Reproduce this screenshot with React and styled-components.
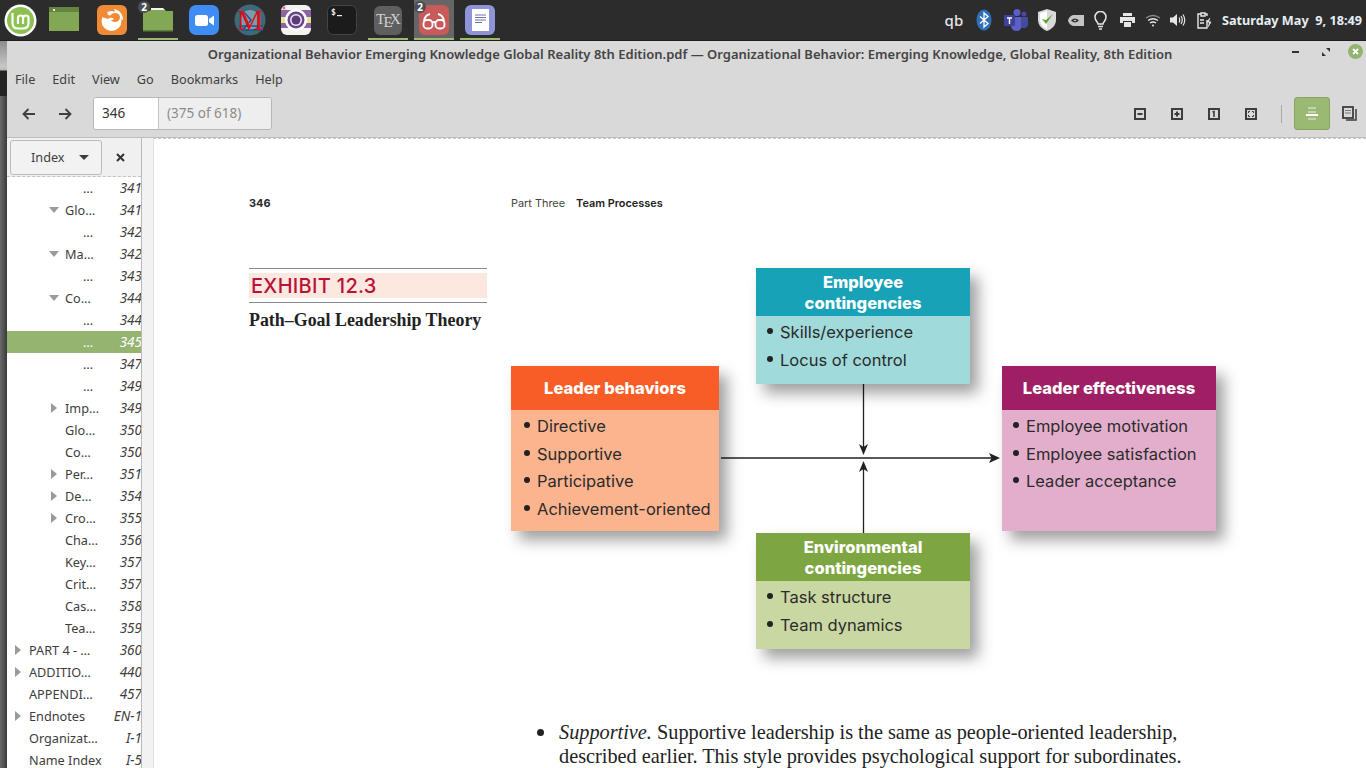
import React from "react";
import styled, { createGlobalStyle } from "styled-components";

const Global = createGlobalStyle`
  html, body { margin: 0; padding: 0; height: 100%; overflow: hidden; background: #2b2b2b; }
  * { box-sizing: border-box; }
`;

const UI = `"Noto Sans", "Open Sans", sans-serif`;
const BOOK = `Inter, "Open Sans", sans-serif`;
const SERIF = `"Liberation Serif", serif`;

const Screen = styled.div`
  width: 1366px; height: 768px; display: flex; flex-direction: column; overflow: hidden; font-family: ${UI};
`;
const Panel = styled.header`
  height: 41px; flex: none; display: flex; align-items: stretch; background: #2c2c2c; border-bottom: 1px solid #1d1d1d;
`;
const Launcher = styled.div`
  position: relative; width: ${p => p.$w || 46}px; margin-left: ${p => p.$ml || 0}px; height: 40px; flex: none;
  display: flex; align-items: center; justify-content: center;
  &::before {
    content: ""; position: absolute; top: 0; bottom: 0; left: 3px; right: 3px;
    background: ${p => p.$hot ? "#666666" : "transparent"};
  }
  &::after {
    content: ""; position: absolute; bottom: 0; left: 3px; right: 3px; height: 2px;
    background: ${p => p.$on ? "#9ab973" : "transparent"};
  }
  & > svg { position: relative; z-index: 1; }
`;
const Badge = styled.span`
  position: absolute; z-index: 2; left: 3px; top: 1px; width: 12px; height: 12px; border-radius: 50%;
  background: #4a4f55; color: #fff; font-size: 10px; font-weight: 700; line-height: 12px; text-align: center;
`;
const Tray = styled.div`
  margin-left: auto; display: flex; align-items: center; height: 40px; padding-right: 4px;
`;
const TraySlot = styled.div`
  width: ${p => p.$w}px; height: 40px; flex: none; display: flex; align-items: center; justify-content: center;
  color: #e6e6e6; font-size: 15px; font-weight: 500;
`;
const Clock = styled.time`
  margin-left: 4px; color: #e5edf5; font-size: 12.7px; font-weight: 700; white-space: pre;
`;

const Desk = styled.div`flex: 1; min-height: 0; display: flex;`;
const Strip = styled.div`
  width: 7px; flex: none;
  background:
    linear-gradient(to bottom, #8c8c8c 0, #c8c8c8 26px, #bdb8ae 29px, #232323 30px, #232323 55px, transparent 55px),
    linear-gradient(to right, #6a6a6a, #3a3a3a);
`;
const Win = styled.div`flex: 1; min-width: 0; display: flex; flex-direction: column; background: #d9d9d9;`;

const TitleBar = styled.div`
  height: 26px; flex: none; position: relative; display: flex; align-items: center; justify-content: center;
  padding: 0 0 1px 7px;
`;
const Title = styled.div`font-size: 13px; font-weight: 600; color: #444; white-space: nowrap;`;
const WinButtons = styled.div`
  position: absolute; right: 3px; top: 3px; display: flex; align-items: center; gap: 15px;
`;
const WinBtn = styled.div`
  width: 15px; height: 15px; display: flex; align-items: center; justify-content: center;
  border-radius: 50%; background: ${p => p.$close ? "#93b46e" : "transparent"};
`;
const MenuBar = styled.nav`
  height: 24px; flex: none; display: flex; align-items: center; gap: 17px; padding-left: 8px;
  font-size: 12.7px; color: #3f3f3f;
`;
const ToolBar = styled.div`
  height: 47px; flex: none; display: flex; align-items: center; padding: 0 0 1px 4px;
  border-bottom: 1px solid #bdbdbd;
`;
const NavBtn = styled.div`
  width: 36px; height: 33px; display: flex; align-items: center; justify-content: center; flex: none;
`;
const PageEntry = styled.div`
  margin-left: 10px; width: 179px; height: 33px; display: flex; border: 1px solid #b8b8b8; border-radius: 3px; overflow: hidden;
  font-size: 13.5px;
`;
const PageInput = styled.div`
  width: 65px; background: #fff; border-right: 1px solid #c4c4c4; color: #333; padding-left: 8px; line-height: 31px;
`;
const PageInfo = styled.div`
  flex: 1; background: #eeeeee; color: #8c8c8c; padding-left: 8px; line-height: 31px;
`;
const ToolRight = styled.div`margin-left: auto; display: flex; align-items: center;`;
const ZoomBtn = styled.div`
  width: 37px; height: 33px; display: flex; align-items: center; justify-content: center; flex: none;
`;
const Sep = styled.div`width: 1px; height: 18px; background: #a9a9a9; margin: 0 12px 0 12px;`;
const Toggle = styled.div`
  width: 36px; height: 33px; flex: none; border-radius: 3px; background: #9ab973; border: 1px solid #86a561;
  display: flex; align-items: center; justify-content: center;
`;
const PlainBtn = styled.div`
  width: 36px; height: 33px; flex: none; display: flex; align-items: center; justify-content: center; padding-left: 2px;
`;

const Main = styled.div`flex: 1; min-height: 0; display: flex; background: #fff;`;
const Sidebar = styled.aside`
  width: 134px; flex: none; display: flex; flex-direction: column; overflow: hidden; background: #fff;
`;
const SideHead = styled.div`
  height: 39px; flex: none; display: flex; align-items: center; padding-left: 3px; background: #f0f0f0;
  border-bottom: 1px dashed #c4c4c4;
`;
const Combo = styled.div`
  width: 92px; height: 35px; flex: none; display: flex; align-items: center; justify-content: space-between;
  padding: 0 12px 0 20px; background: #f2f2f2; border: 1px solid #bbbbbb; border-radius: 3px; font-size: 12.7px; color: #3f3f3f;
`;
const Caret = styled.span`
  width: 0; height: 0; border-left: 5px solid transparent; border-right: 5px solid transparent; border-top: 5px solid #3c3c3c;
`;
const CloseTab = styled.div`
  width: 36px; display: flex; justify-content: center; align-items: center;
`;
const Tree = styled.div`width: 135px;`;
const Row = styled.div`
  height: 22px; display: flex; align-items: center; padding-left: ${p => 8 + p.$d * 18}px;
  background: ${p => p.$sel ? "#95b470" : "transparent"};
  color: ${p => p.$sel ? "#fff" : "#3d3d3d"}; font-size: 12.7px; white-space: nowrap;
`;
const Expander = styled.span`
  width: ${p => p.$down ? 16 : 14}px; flex: none; display: flex; align-items: center;
  margin-left: ${p => p.$down ? "-2px" : "0"};
`;
const RowTitle = styled.span`flex: 1; min-width: 0; overflow: hidden;`;
const RowPage = styled.span`flex: none; font-style: italic; margin-left: 4px; font-size: 13.5px;`;
const Split = styled.div`
  width: 12px; flex: none; background: #f2f2f2; border-left: 1px solid #b9b9b9;
`;
const Doc = styled.main`
  flex: 1; min-width: 0; overflow: hidden; background: #fff; border-top: 1px dashed #c9c9c9; border-left: 1px solid #e2e2e2;
  padding: 56px 0 0 95px; color: #2a2a2a;
`;
const Running = styled.div`
  display: grid; grid-template-columns: 262px 1fr; font-family: ${BOOK}; font-size: 10.9px; line-height: 16px;
`;
const Folio = styled.span`font-weight: 700;`;
const RunHead = styled.span`
  display: flex; gap: 11px; color: #444;
  & b { color: #222; font-weight: 600; }
`;
const Spread = styled.div`
  margin-top: 57px; display: grid; grid-template-columns: 262px 705px; height: 452px;
`;
const Exhibit = styled.div`width: 238px;`;
const ExLabel = styled.div`
  border-top: 1px solid #8a8a8a; border-bottom: 1px solid #8a8a8a; padding: 4px 0;
`;
const ExTint = styled.div`
  height: 25px; background: #fde8df; color: #b9123a; font-family: ${BOOK}; font-size: 20px; letter-spacing: 0.3px; font-weight: 500; line-height: 26px; padding-left: 2px; white-space: nowrap;
`;
const ExTitle = styled.div`
  margin-top: 7px; font-family: ${SERIF}; font-weight: 700; font-size: 17.9px; line-height: 20px; color: #222; white-space: nowrap;
`;
const Diagram = styled.div`position: relative; width: 705px; height: 400px;`;
const Node = styled.section`
  position: absolute; left: ${p => p.$x}px; top: ${p => p.$y}px; width: ${p => p.$w}px; height: ${p => p.$h}px;
  display: flex; flex-direction: column; background: ${p => p.$body};
  box-shadow: 8px 9px 14px rgba(0,0,0,0.38);
  font-family: ${BOOK};
`;
const NodeHead = styled.h3`
  margin: 0; height: ${p => p.$h}px; flex: none; display: flex; align-items: center; justify-content: center; text-align: center;
  background: ${p => p.$bg}; color: #fff; font-size: 16.5px; font-weight: 800; line-height: 21px; padding-top: 1px;
`;
const NodeList = styled.ul`
  list-style: none; margin: 0; padding: ${p => p.$top}px 0 0 ${p => p.$left}px; font-size: 16.5px; color: #2b2b2b;
`;
const NodeItem = styled.li`
  height: ${p => p.$h}px; line-height: ${p => p.$h}px; display: flex; align-items: center; gap: 7px; white-space: nowrap;
  &::before { content: ""; width: 6px; height: 6px; border-radius: 50%; background: #222; margin-bottom: 3px; flex: none; }
`;
const Wires = styled.svg`position: absolute; left: 0; top: 0; overflow: visible; pointer-events: none;`;
const Para = styled.div`
  margin-left: 288px; width: 660px; display: flex; gap: 15px; font-family: ${SERIF}; font-size: 20.3px; line-height: 24px; color: #222;
`;
const ParaDot = styled.span`
  width: 7px; height: 7px; border-radius: 50%; background: #222; flex: none; margin-top: 9px;
`;

const Mint = () => (
  <svg width="33" height="33" viewBox="0 0 33 33">
    <circle cx="16.5" cy="16.5" r="16" fill="#fff" />
    <circle cx="16.5" cy="16.5" r="13.5" fill="#8cc152" />
    <path d="M8.500 9v10q0 5.500 5.500 5.500h5q5.500 0 5.500-5.500v-5q0-2.500-2.500-2.500t-3 2.500v6M14 20v-6q0-2.500 2.500-2.500T19.500 14" fill="none" stroke="#fff" strokeWidth="2.200" />
  </svg>
);
const FolderFlat = () => (
  <svg width="30" height="26" viewBox="0 0 30 26">
    <rect x="0" y="0" width="30" height="24" fill="#82a755" />
    <rect x="0" y="0" width="30" height="5" fill="#64843f" />
    <rect x="4" y="2" width="2" height="2" fill="#e8e8e8" />
  </svg>
);
const FolderTab = () => (
  <svg width="30" height="26" viewBox="0 0 30 26">
    <path d="M8 1h12l2 2H8z" fill="#f3f3f3" />
    <path d="M0 4h6l2-1h14l1 1 h7v20H0z" fill="#82a755" />
    <rect x="0" y="23" width="30" height="1.500" fill="#5f7f3a" />
  </svg>
);
const Firefox = () => (
  <svg width="30" height="30" viewBox="0 0 30 30">
    <rect width="30" height="30" rx="6" fill="#f08a35" />
    <circle cx="14.500" cy="16" r="10" fill="#fff" />
    <path d="M17 4c6 1 9 6 9 11l-4-1-3-5z" fill="#fff" />
    <ellipse cx="18" cy="12.500" rx="5" ry="4.500" fill="#f08a35" />
    <path d="M5 12c1-3 3-5 5-6l1 4 4 1c-1 2-3 2-4 3z" fill="#f08a35" />
    <path d="M12 13q3-1 5 1-2 2-5 1z" fill="#fff" />
  </svg>
);
const Zoom = () => (
  <svg width="30" height="30" viewBox="0 0 30 30">
    <rect width="30" height="30" rx="7" fill="#3f8cf5" />
    <rect x="6" y="10" width="13" height="11" rx="2.500" fill="#fff" />
    <path d="M20 14l5-3.500v10L20 17z" fill="#fff" />
  </svg>
);
const Maple = () => (
  <svg width="32" height="32" viewBox="0 0 32 32">
    <circle cx="16" cy="16" r="15.500" fill="#3f6878" />
    <circle cx="16" cy="16" r="10" fill="#7d9cab" />
    <path d="M5 22h24M9 7l8 9-8 10h20" fill="none" stroke="#274f87" strokeWidth="1.500" />
    <text x="16" y="26" textAnchor="middle" fontFamily="Liberation Serif, serif" fontSize="30" fill="#d8101c">M</text>
  </svg>
);
const Camera = () => (
  <svg width="30" height="30" viewBox="0 0 30 30">
    <rect width="30" height="30" rx="6" fill="#f2f2ee" />
    <rect y="5" width="30" height="7" fill="#8c64a6" />
    <rect y="12" width="30" height="6" fill="#e7e29b" />
    <rect y="18" width="30" height="5" fill="#8c64a6" />
    <circle cx="15" cy="15" r="11" fill="#fff" />
    <circle cx="15" cy="15" r="8.500" fill="#6a4587" />
    <circle cx="15" cy="15" r="6" fill="#f0e9f5" />
    <circle cx="15" cy="15" r="4.500" fill="#5b3b78" />
    <circle cx="3" cy="3" r="1.500" fill="#ee6a6a" />
  </svg>
);
const Term = () => (
  <svg width="30" height="30" viewBox="0 0 30 30">
    <rect x="0.500" y="0.500" width="29" height="29" rx="6" fill="#1b1b1b" stroke="#444" />
    <text x="4" y="10" fontFamily="DejaVu Sans Mono, monospace" fontSize="8" fontWeight="700" fill="#eee">$</text>
    <rect x="10" y="10" width="5" height="1.200" fill="#eee" />
  </svg>
);
const Tex = () => (
  <svg width="28" height="29" viewBox="0 0 28 29">
    <rect width="28" height="29" rx="6" fill="#5f5f5f" />
    <text x="2" y="18" fontFamily="Liberation Serif, serif" fontSize="15" fill="#d2d2d2">T</text>
    <text x="9.500" y="21" fontFamily="Liberation Serif, serif" fontSize="15" fill="#d2d2d2">E</text>
    <text x="16" y="18" fontFamily="Liberation Serif, serif" fontSize="15" fill="#d2d2d2">X</text>
  </svg>
);
const Reader = () => (
  <svg width="30" height="30" viewBox="0 0 30 30">
    <rect width="30" height="30" rx="6" fill="#c95a5a" />
    <rect x="4.500" y="15" width="9" height="8.500" rx="3.500" fill="none" stroke="#fff" strokeWidth="1.800" />
    <rect x="16.500" y="15" width="9" height="8.500" rx="3.500" fill="none" stroke="#fff" strokeWidth="1.800" />
    <path d="M13.500 17.500q1.500-1 3 0M5 16q1-6 6-7M25 16q-1-6-6-7" fill="none" stroke="#fff" strokeWidth="1.800" />
  </svg>
);
const Notes = () => (
  <svg width="30" height="30" viewBox="0 0 30 30">
    <rect width="30" height="30" rx="6" fill="#8f93d8" />
    <rect x="7" y="4" width="17" height="22" fill="#fff" />
    <path d="M10 10h11M10 12.500h11M10 15h11M10 17.500h7" stroke="#6f73a8" strokeWidth="1" />
  </svg>
);

const S = "#e6e6e6";
const Bluetooth = () => (
  <svg width="16" height="22" viewBox="0 0 16 22">
    <ellipse cx="8" cy="11" rx="7.500" ry="10.500" fill="#2f6fb5" />
    <path d="M4 7.500l8 7-4 3.500V4l4 3.500-8 7" fill="none" stroke="#fff" strokeWidth="1.300" />
  </svg>
);
const Teams = () => (
  <svg width="24" height="22" viewBox="0 0 24 22">
    <circle cx="13" cy="3.500" r="3.500" fill="#5b5fc7" />
    <circle cx="20" cy="5" r="2.500" fill="#454a9e" />
    <path d="M15 8h9v7a4 4 0 01-5 4h-4z" fill="#454a9e" />
    <path d="M6 8h11v10a4 4 0 01-4 4 6 6 0 01-6-5z" fill="#5b5fc7" />
    <rect y="6" width="11" height="11" rx="1" fill="#3e4298" />
    <path d="M3 9h5M5.500 9v6" stroke="#fff" strokeWidth="1.400" />
  </svg>
);
const Shield = () => (
  <svg width="20" height="22" viewBox="0 0 20 22">
    <path d="M10 0l9 3v8c0 5-4 9-9 11-5-2-9-6-9-11V3z" fill="#d9d9d9" />
    <path d="M10 2v18c-4-2-7-5-7-9V4z" fill="#fff" />
    <path d="M5 10l4 5 7-10-7 6z" fill="#5ca532" />
  </svg>
);
const Nvidia = () => (
  <svg width="16" height="11" viewBox="0 0 16 11">
    <path d="M5 0h11v11H5C2 10 0 7 0 5.500 0 4 2 1 5 0z" fill="#c4c4c4" />
    <path d="M3 5.500q4-4 8 0-4 4-8 0zM5.500 5.500q1.500-1.500 3 0-1.500 1.500-3 0z" fill="#333" fillRule="evenodd" />
  </svg>
);
const Bulb = () => (
  <svg width="13" height="19" viewBox="0 0 13 19" fill="none" stroke={S} strokeWidth="1.500">
    <path d="M4 13c0-2-3-3-3-7a5.500 5.500 0 0111 0c0 4-3 5-3 7z" />
    <path d="M4 15.500h5M5 18h3" />
  </svg>
);
const Printer = () => (
  <svg width="15" height="14" viewBox="0 0 15 14">
    <path d="M3 0h9v3H3zM0 4h15v6h-3V8H3v2H0zM4 9h7v5H4z" fill={S} />
  </svg>
);
const Wifi = () => (
  <svg width="16" height="13" viewBox="0 0 16 13" fill="none" stroke={S} strokeWidth="1.300">
    <path d="M1 4q7-5 14 0" opacity=".5" />
    <path d="M3 6.500q5-3.500 10 0M5 9q3-2 6 0" />
    <circle cx="8" cy="11.500" r="1" fill={S} stroke="none" />
  </svg>
);
const Volume = () => (
  <svg width="16" height="14" viewBox="0 0 16 14">
    <path d="M0 4.500h3L7 1v12L3 9.500H0z" fill={S} />
    <path d="M9 4.500q1.500 2.500 0 5M11 3q2.500 4 0 8M13 1.500q3.500 5.500 0 11" fill="none" stroke={S} strokeWidth="1.200" />
  </svg>
);
const Clip = () => (
  <svg width="15" height="17" viewBox="0 0 15 17" fill="none" stroke={S} strokeWidth="1.400">
    <path d="M4 2H1v14h9V8M8 2h2v2" />
    <path d="M4 1h4v3H4zM3 8h4M3 11h4" />
    <path d="M13 6l-3 4h4l-3 5" fill={S} strokeWidth=".8" />
  </svg>
);

const ArrowL = ({ flip }) => (
  <svg width="14" height="12" viewBox="0 0 14 12" fill="none" stroke="#3f3f3f" strokeWidth="1.800" style={flip ? { transform: "scaleX(-1)" } : undefined}>
    <path d="M13 6H2M6.500 1L1.500 6l5 5" />
  </svg>
);
const Mark = ({ d, w = 2 }) => (
  <svg width="12" height="12" viewBox="0 0 12 12">
    <rect x="1" y="1" width="10" height="10" fill="none" stroke="#3d3d3d" strokeWidth="2" />
    <path d={d} fill="none" stroke="#3d3d3d" strokeWidth={w} />
  </svg>
);
const Continuous = () => (
  <svg width="14" height="16" viewBox="0 0 14 16">
    <path d="M3 1h8v2H3zM3 5h8v2H3zM3 12h8v2H3z" fill="#c3d4ad" />
    <rect x="1" y="8" width="12" height="2" fill="#fff" />
  </svg>
);
const Dual = () => (
  <svg width="15" height="15" viewBox="0 0 15 15" fill="none" stroke="#3d3d3d">
    <rect x="1" y="1" width="10" height="11" strokeWidth="1.800" />
    <path d="M14 3v11H4" strokeWidth="1.500" />
    <path d="M3 4.500h6M3 7h6" strokeWidth="1.200" stroke="#777" />
  </svg>
);
const Down = () => <svg width="10" height="6" viewBox="0 0 10 6"><path d="M0 0h10L5 6z" fill="#9a9a9a" /></svg>;
const Right = () => <svg width="6" height="10" viewBox="0 0 6 10"><path d="M0 0v10l6-5z" fill="#9a9a9a" /></svg>;

const rows = [
  [3, 0, "…", "341"], [2, "d", "Glo…", "341"], [3, 0, "…", "342"], [2, "d", "Ma…", "342"], [3, 0, "…", "343"],
  [2, "d", "Co…", "344"], [3, 0, "…", "344"], [3, 0, "…", "345", true], [3, 0, "…", "347"], [3, 0, "…", "349"],
  [2, "r", "Imp…", "349"], [2, 0, "Glo…", "350"], [2, 0, "Co…", "350"], [2, "r", "Per…", "351"], [2, "r", "De…", "354"],
  [2, "r", "Cro…", "355"], [2, 0, "Cha…", "356"], [2, 0, "Key…", "357"], [2, 0, "Crit…", "357"], [2, 0, "Cas…", "358"],
  [2, 0, "Tea…", "359"], [0, "r", "PART 4 - …", "360"], [0, "r", "ADDITIO…", "440"], [0, 0, "APPENDI…", "457"],
  [0, "r", "Endnotes", "EN-1"], [0, 0, "Organizat…", "I-1"], [0, 0, "Name Index", "I-5"],
];

const BoxNode = ({ x, y, h, w, head, headH, headBg, body, items, top, left, step }) => (
  <Node $x={x} $y={y} $w={w} $h={h} $body={body}>
    <NodeHead $h={headH} $bg={headBg}>{head}</NodeHead>
    <NodeList $top={top} $left={left}>
      {items.map(i => <NodeItem key={i} $h={step}>{i}</NodeItem>)}
    </NodeList>
  </Node>
);

export default function App() {
  return (
    <Screen>
      <Global />
      <Panel>
        <Launcher $w={41}><Mint /></Launcher>
        <Launcher><FolderFlat /></Launcher>
        <Launcher $ml={2}><Firefox /></Launcher>
        <Launcher $on><Badge>2</Badge><FolderTab /></Launcher>
        <Launcher><Zoom /></Launcher>
        <Launcher><Maple /></Launcher>
        <Launcher><Camera /></Launcher>
        <Launcher><Term /></Launcher>
        <Launcher $on><Tex /></Launcher>
        <Launcher $on $hot><Badge>2</Badge><Reader /></Launcher>
        <Launcher $on><Notes /></Launcher>
        <Tray>
          <TraySlot $w={24}>qb</TraySlot>
          <TraySlot $w={36}><Bluetooth /></TraySlot>
          <TraySlot $w={28}><Teams /></TraySlot>
          <TraySlot $w={34}><Shield /></TraySlot>
          <TraySlot $w={24}><Nvidia /></TraySlot>
          <TraySlot $w={26}><Bulb /></TraySlot>
          <TraySlot $w={28}><Printer /></TraySlot>
          <TraySlot $w={22}><Wifi /></TraySlot>
          <TraySlot $w={28}><Volume /></TraySlot>
          <TraySlot $w={26}><Clip /></TraySlot>
          <Clock>Saturday May  9, 18:49</Clock>
        </Tray>
      </Panel>
      <Desk>
        <Strip />
        <Win>
          <TitleBar>
            <Title>Organizational Behavior Emerging Knowledge Global Reality 8th Edition.pdf — Organizational Behavior: Emerging Knowledge, Global Reality, 8th Edition</Title>
            <WinButtons>
              <WinBtn><svg width="8" height="2"><rect width="7" height="2" fill="#333" /></svg></WinBtn>
              <WinBtn><svg width="8" height="8" viewBox="0 0 8 8"><path d="M4 0h4v4zM0 4l4 4H0z" fill="#333" /></svg></WinBtn>
              <WinBtn $close><svg width="7" height="7" viewBox="0 0 7 7"><path d="M1 1l5 5M6 1L1 6" stroke="#fff" strokeWidth="1.800" /></svg></WinBtn>
            </WinButtons>
          </TitleBar>
          <MenuBar>
            <span>File</span><span>Edit</span><span>View</span><span>Go</span><span>Bookmarks</span><span>Help</span>
          </MenuBar>
          <ToolBar>
            <NavBtn><ArrowL /></NavBtn>
            <NavBtn><ArrowL flip /></NavBtn>
            <PageEntry>
              <PageInput>346</PageInput>
              <PageInfo>(375 of 618)</PageInfo>
            </PageEntry>
            <ToolRight>
              <ZoomBtn><Mark d="M3.500 6h5" /></ZoomBtn>
              <ZoomBtn><Mark d="M3.500 6h5M6 3.500v5" /></ZoomBtn>
              <ZoomBtn><Mark d="M4.500 4L6 3.500V9" w={1.600} /></ZoomBtn>
              <ZoomBtn><Mark d="M3.500 5V3.500H5M7 3.500h1.500V5M8.500 7v1.500H7M5 8.500H3.500V7" w={1} /></ZoomBtn>
              <Sep />
              <Toggle><Continuous /></Toggle>
              <PlainBtn><Dual /></PlainBtn>
            </ToolRight>
          </ToolBar>
          <Main>
            <Sidebar>
              <SideHead>
                <Combo>Index<Caret /></Combo>
                <CloseTab><svg width="9" height="9" viewBox="0 0 9 9"><path d="M1 1l7 7M8 1L1 8" stroke="#333" strokeWidth="2" /></svg></CloseTab>
              </SideHead>
              <Tree>
                {rows.map(([d, a, t, p, sel], i) => (
                  <Row key={i} $d={d} $sel={sel}>
                    <Expander $down={a === "d"}>{a === "d" ? <Down /> : a === "r" ? <Right /> : null}</Expander>
                    <RowTitle>{t}</RowTitle>
                    <RowPage>{p}</RowPage>
                  </Row>
                ))}
              </Tree>
            </Sidebar>
            <Split />
            <Doc>
              <Running>
                <Folio>346</Folio>
                <RunHead>Part Three <b>Team Processes</b></RunHead>
              </Running>
              <Spread>
                <Exhibit>
                  <ExLabel><ExTint>EXHIBIT 12.3</ExTint></ExLabel>
                  <ExTitle>Path–Goal Leadership Theory</ExTitle>
                </Exhibit>
                <Diagram>
                  <Wires width="705" height="400" viewBox="0 0 705 400">
                    <g stroke="#222" strokeWidth="1.300" fill="none">
                      <path d="M210 190H482" />
                      <path d="M352.500 116v66M352.500 265v-66" />
                    </g>
                    <path d="M489 190l-11-5 2.500 5-2.500 5z" fill="#222" />
                    <path d="M352.500 187l-4.500-11 4.500 3 4.500-3z" fill="#222" />
                    <path d="M352.500 193l-4.500 11 4.500-3 4.500 3z" fill="#222" />
                  </Wires>
                  <BoxNode x={245} y={0} w={214} h={116} headH={48} headBg="#17a2b8" body="#a0dadb" head={<span>Employee<br />contingencies</span>} items={["Skills/experience", "Locus of control"]} top={2} left={11} step={28} />
                  <BoxNode x={0} y={98} w={208} h={165} headH={44} headBg="#f95d27" body="#fcb48f" head="Leader behaviors" items={["Directive", "Supportive", "Participative", "Achievement-oriented"]} top={3} left={13} step={27.600} />
                  <BoxNode x={491} y={98} w={214} h={165} headH={44} headBg="#9e1f63" body="#e3aecb" head="Leader effectiveness" items={["Employee motivation", "Employee satisfaction", "Leader acceptance"]} top={3} left={11} step={27.600} />
                  <BoxNode x={245} y={265} w={214} h={116} headH={48} headBg="#7da642" body="#c9d8a2" head={<span>Environmental<br />contingencies</span>} items={["Task structure", "Team dynamics"]} top={2} left={11} step={28} />
                </Diagram>
              </Spread>
              <Para>
                <ParaDot />
                <span><i>Supportive.</i> Supportive leadership is the same as people-oriented leadership, described earlier. This style provides psychological support for subordinates.</span>
              </Para>
            </Doc>
          </Main>
        </Win>
      </Desk>
    </Screen>
  );
}
